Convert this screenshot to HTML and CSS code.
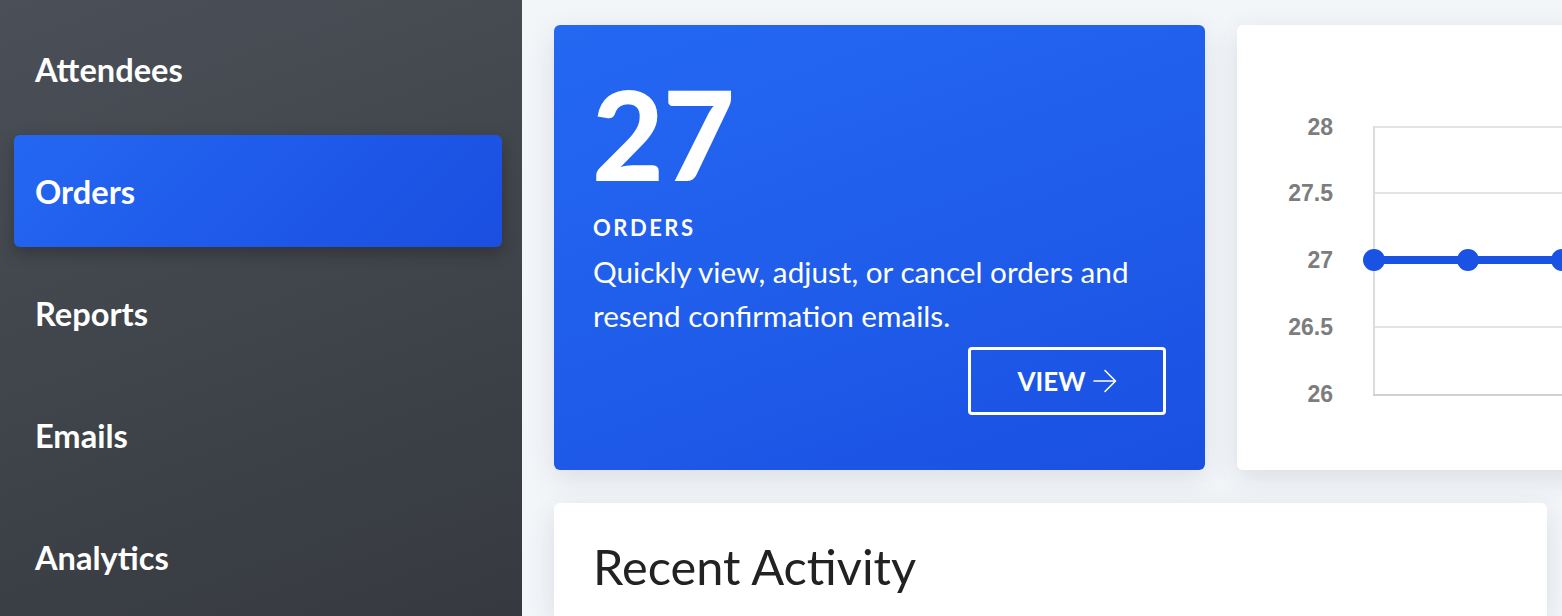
FILE: index.html
```html
<!DOCTYPE html>
<html lang="en">
<head>
<meta charset="utf-8">
<title>Dashboard</title>
<link rel="stylesheet" href="styles.css">
</head>
<body>
<div class="app">
  <nav class="sidebar">
    <a class="nav-item" href="#">Attendees</a>
    <a class="nav-item active" href="#">Orders</a>
    <a class="nav-item" href="#">Reports</a>
    <a class="nav-item" href="#">Emails</a>
    <a class="nav-item" href="#">Analytics</a>
  </nav>
  <main class="main">
    <div class="top-row">
      <section class="card card-orders">
        <div class="stat-number">27</div>
        <div class="stat-label">ORDERS</div>
        <p class="stat-desc">Quickly view, adjust, or cancel orders and resend confirmation emails.</p>
        <a class="btn-view" href="#">VIEW
          <svg class="arrow" width="24" height="24" viewBox="0 0 24 24" fill="none" stroke="#fff" stroke-width="1.6" stroke-linecap="round" stroke-linejoin="round"><path d="M1 12h21M12 1.5l10.5 10.5L12 22.5"/></svg>
        </a>
      </section>
      <section class="card card-chart">
        <svg class="chart" width="651" height="445" viewBox="0 0 651 445">
          <g class="grid" stroke="#e3e3e3" stroke-width="2">
            <line x1="137" y1="102" x2="651" y2="102"/>
            <line x1="137" y1="168" x2="651" y2="168"/>
            <line x1="137" y1="235" x2="651" y2="235"/>
            <line x1="137" y1="302" x2="651" y2="302"/>
          </g>
          <line x1="137" y1="101" x2="137" y2="370" stroke="#dcdcdc" stroke-width="2"/>
          <line x1="136" y1="370" x2="651" y2="370" stroke="#d0d0d0" stroke-width="2"/>
          <g class="labels" fill="#7d7d7d" font-family="Liberation Sans, Arial, sans-serif" font-weight="700" font-size="23" text-anchor="end">
            <text x="96" y="110">28</text>
            <text x="96" y="176">27.5</text>
            <text x="96" y="243">27</text>
            <text x="96" y="310">26.5</text>
            <text x="96" y="377">26</text>
          </g>
          <line x1="137" y1="235" x2="651" y2="235" stroke="#1a53e3" stroke-width="8"/>
          <g fill="#1a53e3">
            <circle cx="137" cy="235" r="11"/>
            <circle cx="231" cy="235" r="11"/>
            <circle cx="325" cy="235" r="11"/>
          </g>
        </svg>
      </section>
    </div>
    <section class="card card-activity">
      <h2 class="activity-title">Recent Activity</h2>
    </section>
  </main>
</div>
</body>
</html>
```

FILE: styles.css
```css
* { box-sizing: border-box; }
html, body {
  margin: 0;
  padding: 0;
  width: 1562px;
  height: 616px;
  overflow: hidden;
  font-family: Lato, "Open Sans", sans-serif;
}
.app {
  display: flex;
  width: 1562px;
  height: 616px;
}
.sidebar {
  width: 522px;
  flex: 0 0 522px;
  height: 100%;
  background: linear-gradient(160deg, #4b5058 0%, #40444b 50%, #363a40 100%);
  padding: 13px 20px 0 14px;
  display: flex;
  flex-direction: column;
  gap: 10px;
}
.nav-item {
  display: flex;
  align-items: center;
  height: 112px;
  flex: 0 0 112px;
  padding-left: 21px;
  color: #fff;
  text-decoration: none;
  font-size: 32.6px;
  font-weight: 700;
  border-radius: 6px;
}
.nav-item.active {
  background: linear-gradient(135deg, #2467f2 0%, #1f5aea 50%, #1a4fe0 100%);
  box-shadow: 0 6px 16px rgba(0, 0, 0, 0.25);
}
.main {
  flex: 1;
  min-width: 0;
  height: 100%;
  overflow: hidden;
  background: #f3f6f9;
  padding: 25px 15px 0 32px;
  display: flex;
  flex-direction: column;
  gap: 33px;
}
.top-row {
  display: grid;
  grid-template-columns: 651px 651px;
  gap: 32px;
  height: 445px;
  flex: 0 0 445px;
}
.card {
  border-radius: 6px;
  background: #fff;
  box-shadow: 0 8px 28px rgba(30, 40, 60, 0.12);
}
.card-orders {
  background: linear-gradient(160deg, #2468f2 0%, #1f5cea 55%, #1a50e2 100%);
  color: #fff;
  padding: 46px 39px 55px 39px;
  display: flex;
  flex-direction: column;
}
.stat-number {
  font-size: 124px;
  line-height: 1;
  font-weight: 900;
  letter-spacing: -1px;
  margin-left: -1px;
}
.stat-label {
  margin-top: 20px;
  font-size: 22px;
  line-height: 26px;
  font-weight: 700;
  letter-spacing: 2.5px;
}
.stat-desc {
  margin: 9px 0 0 0;
  font-size: 29.7px;
  line-height: 44px;
  font-weight: 400;
}
.btn-view {
  margin-top: 9px;
  align-self: flex-end;
  width: 198px;
  height: 68px;
  border: 3px solid #fff;
  border-radius: 4px;
  color: #fff;
  text-decoration: none;
  font-size: 26px;
  font-weight: 700;
  display: flex;
  align-items: center;
  justify-content: center;
  gap: 7px;
}
.arrow { display: block; }
.card-chart {
  overflow: hidden;
}
.chart { display: block; }
.card-activity {
  flex: 1;
  padding: 34px 39px 0 39px;
  border-radius: 6px 6px 0 0;
}
.activity-title {
  margin: 0;
  font-size: 48.7px;
  line-height: 1.2;
  font-weight: 400;
  color: #222;
}
```
